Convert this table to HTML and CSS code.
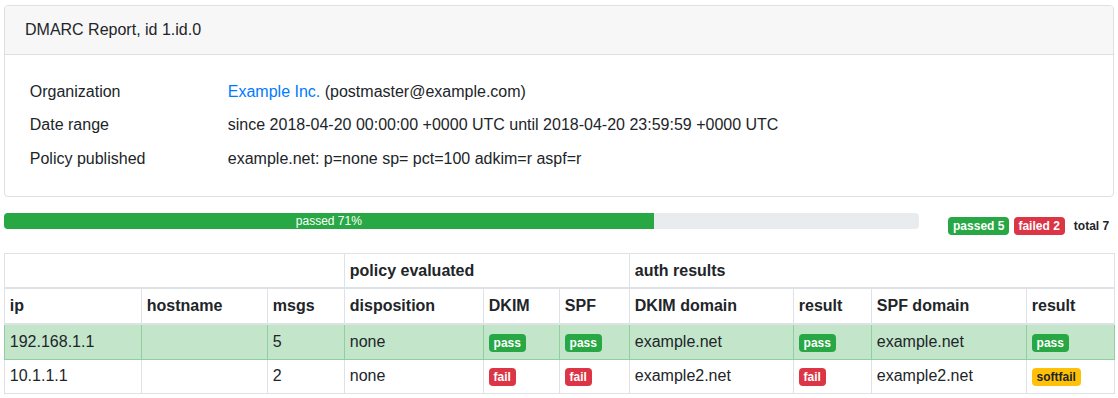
FILE: index.html
```html
<!DOCTYPE html>
<html lang="en">
<head>
<meta charset="utf-8">
<title>DMARC Report</title>
<link rel="stylesheet" href="styles.css">
</head>
<body>
<div class="page">
  <div class="card">
    <div class="card-header">DMARC Report, id 1.id.0</div>
    <div class="card-body">
      <table class="info-table">
        <tr><td class="label">Organization</td><td><a href="#">Example Inc.</a> (postmaster@example.com)</td></tr>
        <tr><td class="label">Date range</td><td>since 2018-04-20 00:00:00 +0000 UTC until 2018-04-20 23:59:59 +0000 UTC</td></tr>
        <tr><td class="label">Policy published</td><td>example.net: p=none sp= pct=100 adkim=r aspf=r</td></tr>
      </table>
    </div>
  </div>

  <div class="summary">
    <div class="progress"><div class="progress-bar" style="width: 71%">passed 71%</div></div>
    <div class="counts"><span class="badge badge-success">passed 5</span> <span class="badge badge-danger">failed 2</span> <span class="badge">total 7</span></div>
  </div>

  <table class="records">
    <colgroup>
      <col class="c-ip"><col class="c-host"><col class="c-msgs"><col class="c-disp"><col class="c-dkim"><col class="c-spf"><col class="c-dkimd"><col class="c-res"><col class="c-spfd"><col class="c-res2">
    </colgroup>
    <thead>
      <tr><th colspan="3"></th><th colspan="3">policy evaluated</th><th colspan="4">auth results</th></tr>
      <tr><th>ip</th><th>hostname</th><th>msgs</th><th>disposition</th><th>DKIM</th><th>SPF</th><th>DKIM domain</th><th>result</th><th>SPF domain</th><th>result</th></tr>
    </thead>
    <tbody>
      <tr class="row-success">
        <td>192.168.1.1</td><td></td><td>5</td><td>none</td>
        <td><span class="badge badge-success">pass</span></td>
        <td><span class="badge badge-success">pass</span></td>
        <td>example.net</td>
        <td><span class="badge badge-success">pass</span></td>
        <td>example.net</td>
        <td><span class="badge badge-success">pass</span></td>
      </tr>
      <tr>
        <td>10.1.1.1</td><td></td><td>2</td><td>none</td>
        <td><span class="badge badge-danger">fail</span></td>
        <td><span class="badge badge-danger">fail</span></td>
        <td>example2.net</td>
        <td><span class="badge badge-danger">fail</span></td>
        <td>example2.net</td>
        <td><span class="badge badge-warning">softfail</span></td>
      </tr>
    </tbody>
  </table>
</div>
</body>
</html>
```

FILE: styles.css
```css
* { box-sizing: border-box; }

body {
  margin: 0;
  font-family: "Liberation Sans", Arial, sans-serif;
  font-size: 16px;
  line-height: 24px;
  color: #212529;
  background: #fff;
}

.page {
  padding: 5px 4px 0 4px;
}

a { color: #007bff; text-decoration: none; }

.card {
  margin: 0 0 16px 0;
  border: 1px solid #dfdfdf;
  border-radius: 4px;
  background: #fff;
}

.card-header {
  padding: 12px 20px;
  background: #f7f7f7;
  border-bottom: 1px solid #dfdfdf;
  border-radius: 3px 3px 0 0;
}

.card-body {
  padding: 20px;
}

.info-table {
  border-collapse: collapse;
  width: 100%;
}

.info-table td {
  padding: 4.8px;
  vertical-align: top;
}

.info-table td.label {
  width: 198px;
}

.summary {
  display: grid;
  grid-template-columns: 915px 1fr;
  align-items: start;
  margin-bottom: 16px;
}

.progress {
  display: flex;
  height: 16px;
  overflow: hidden;
  font-size: 12px;
  line-height: 16px;
  background: #e9ecef;
  border-radius: 4px;
}

.progress-bar {
  background: #28a745;
  color: #fff;
  text-align: center;
  white-space: nowrap;
}

.counts {
  text-align: right;
  line-height: 24px;
}

.badge {
  display: inline-block;
  padding: 3px 4.8px;
  font-size: 12px;
  font-weight: 700;
  line-height: 1;
  text-align: center;
  white-space: nowrap;
  vertical-align: baseline;
  border-radius: 4px;
}

.badge-success { background: #28a745; color: #fff; }
.badge-danger { background: #dc3545; color: #fff; }
.badge-warning { background: #ffc107; color: #212529; }

.records {
  width: 1110px;
  table-layout: fixed;
  border-collapse: collapse;
  margin-bottom: 16px;
}

.records th,
.records td {
  padding: 4.8px;
  border: 1px solid #dee2e6;
  vertical-align: top;
  text-align: left;
  white-space: nowrap;
}

.records th { font-weight: 700; }

.records thead th {
  border-bottom-width: 2px;
  vertical-align: bottom;
}

.records .row-success td {
  background: #c3e6cb;
  border-color: #8fd19e;
}

.c-ip { width: 137px; }
.c-host { width: 126px; }
.c-msgs { width: 77px; }
.c-disp { width: 139px; }
.c-dkim { width: 76px; }
.c-spf { width: 70px; }
.c-dkimd { width: 164px; }
.c-res { width: 78px; }
.c-spfd { width: 155px; }
.c-res2 { width: 88px; }
```
